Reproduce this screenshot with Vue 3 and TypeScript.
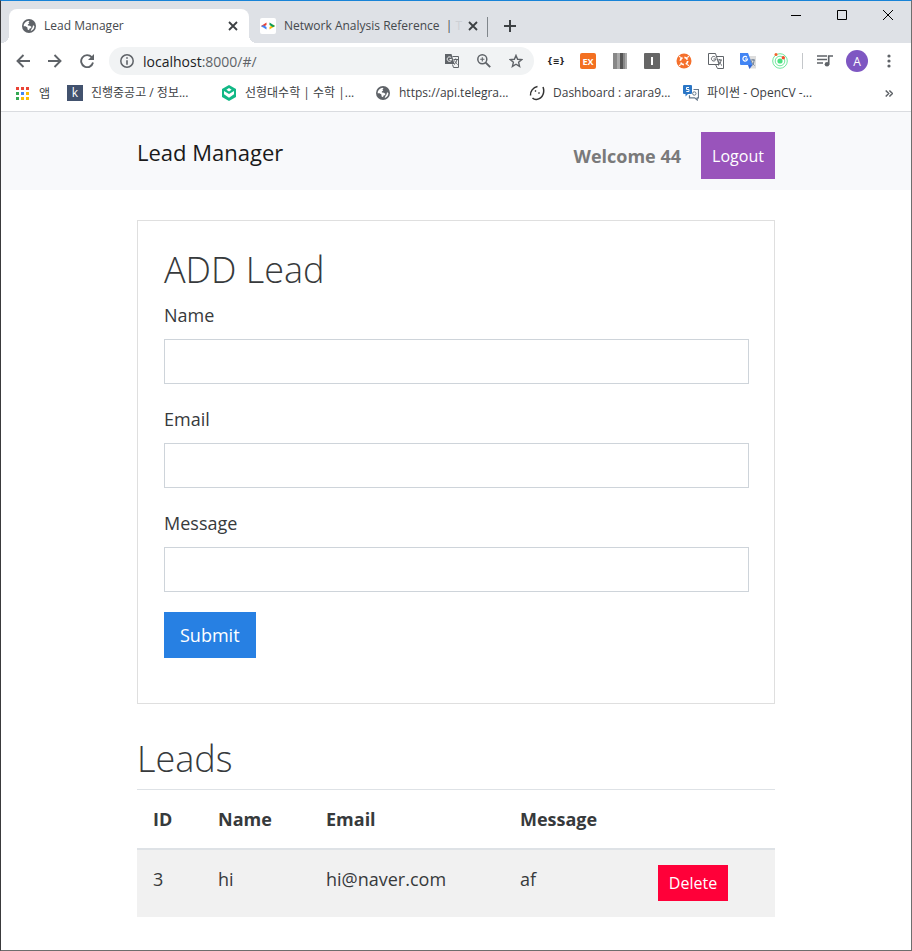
<script setup lang="ts">
import { ref } from 'vue'

interface Lead {
  id: number
  name: string
  email: string
  message: string
}

interface Bookmark {
  icon: string
  label: string
}

const bookmarks: Bookmark[] = [
  { icon: 'k', label: '진행중공고 / 정보...' },
  { icon: 'hex', label: '선형대수학 | 수학 |...' },
  { icon: 'globe', label: 'https://api.telegra...' },
  { icon: 'ring', label: 'Dashboard : arara9...' },
  { icon: 'chat', label: '파이썬 - OpenCV -...' },
]

const appColors = ['#ea4335', '#ea4335', '#ea4335', '#34a853', '#4285f4', '#fbbc05', '#34a853', '#fbbc05', '#fbbc05']

const name = ref('')
const email = ref('')
const message = ref('')
const leads = ref<Lead[]>([{ id: 3, name: 'hi', email: 'hi@naver.com', message: 'af' }])

function addLead(): void {
  const nextId = leads.value.reduce((max, l) => Math.max(max, l.id), 0) + 1
  leads.value.push({ id: nextId, name: name.value, email: email.value, message: message.value })
  name.value = ''
  email.value = ''
  message.value = ''
}

function removeLead(id: number): void {
  leads.value = leads.value.filter((l) => l.id !== id)
}
</script>

<template>
  <div class="window">
    <svg class="defs" aria-hidden="true">
      <symbol id="globe" viewBox="0 0 14 14">
        <circle cx="7" cy="7" r="7" fill="#5f6368" />
        <path d="M1.600 7.200C1.600 4.500 3.600 2.200 6.300 1.700L7.600 2.600 6.400 3.600 7.300 4.400 5.800 5.600 5.900 6.600 8 6.700 9.600 8 8.600 9.300 7.300 9.700 7.200 11.200 5.600 10.400 5.400 8.600 3.600 7.300z" fill="#fff" />
        <path d="M8.600 12.200C11 11.500 12.400 9.500 12.400 7.100L11 6.200 10.600 8.300 9.400 10z" fill="#fff" />
      </symbol>
      <symbol id="close" viewBox="0 0 10 10">
        <path d="M1 1l8 8M9 1l-8 8" stroke="currentColor" stroke-width="1.8" fill="none" />
      </symbol>
    </svg>

    <header class="tabstrip">
      <div class="tab active">
        <svg class="favicon"><use href="#globe" /></svg>
        <span class="tab-title">Lead Manager</span>
        <button class="tab-close" aria-label="Close tab"><svg width="10" height="10"><use href="#close" /></svg></button>
      </div>
      <div class="tab idle">
        <svg class="favicon wide" viewBox="0 0 16 16">
          <rect width="16" height="16" rx="2" fill="#fff" />
          <path d="M6.500 4.500L1 8l1.800 1.200L6.500 7z" fill="#ea4335" />
          <path d="M1 8l5.500 3.500V9L3.800 7.200z" fill="#4285f4" />
          <path d="M9.500 11.500L15 8l-1.800-1.200L9.500 9z" fill="#fbbc05" />
          <path d="M9.500 4.500L15 8l-2 1.300L9.500 7z" fill="#0f9d58" />
        </svg>
        <span class="tab-title">Network Analysis Reference&nbsp; | <span class="faded">T</span></span>
        <button class="tab-close" aria-label="Close tab"><svg width="10" height="10"><use href="#close" /></svg></button>
      </div>
      <button class="new-tab" aria-label="New tab">
        <svg width="12" height="12" viewBox="0 0 12 12"><path d="M6 0v12M0 6h12" stroke="#3c4043" stroke-width="2" /></svg>
      </button>
      <div class="controls">
        <button aria-label="Minimize"><svg width="10" height="10"><path d="M0 5.500h10" stroke="#000" /></svg></button>
        <button aria-label="Maximize"><svg width="10" height="10"><path d="M.5.5h9v9h-9z" stroke="#000" fill="none" /></svg></button>
        <button aria-label="Close"><svg width="10" height="10"><path d="M0 0l10 10M10 0L0 10" stroke="#000" /></svg></button>
      </div>
    </header>

    <div class="toolbar">
      <button class="tool" aria-label="Back">
        <svg width="14" height="14" viewBox="0 0 14 14"><path d="M14 7H1.500M7.500 1L1.500 7l6 6" class="stroke" /></svg>
      </button>
      <button class="tool" aria-label="Forward">
        <svg width="14" height="14" viewBox="0 0 14 14"><path d="M0 7h12.500M6.500 1l6 6-6 6" class="stroke" /></svg>
      </button>
      <button class="tool" aria-label="Reload">
        <svg width="14" height="14" viewBox="0 0 14 14">
          <path d="M11.700 3.200A6 6 0 1 0 13 8.500" class="stroke" />
          <path d="M14 0v6H8z" fill="#5f6368" />
        </svg>
      </button>
      <div class="omnibox">
        <svg width="14" height="14" viewBox="0 0 14 14">
          <circle cx="7" cy="7" r="6.200" fill="none" stroke="#5f6368" stroke-width="1.500" />
          <path d="M7 3.200v1.600M7 6.200v4.600" stroke="#5f6368" stroke-width="1.600" />
        </svg>
        <span class="url">localhost<i>:8000/#/</i></span>
        <button class="tool" aria-label="Translate">
          <svg width="14" height="14" viewBox="0 0 14 14">
            <path d="M0 0h6.500l3 10H0z" fill="#5f6368" />
            <path d="M7.500 2.500h6v11h-5l-1-3" fill="none" stroke="#5f6368" />
            <path d="M6.200 3.800A2.200 2.200 0 1 0 6.600 5.500H4.500" fill="none" stroke="#fff" />
            <path d="M8.500 5.500H13M10.700 4.500v1M9 10.500c1.500-1 2.500-2.500 3-5M9.500 6.500c.7 1.500 1.500 2.500 3 4" fill="none" stroke="#5f6368" />
          </svg>
        </button>
        <button class="tool" aria-label="Zoom">
          <svg width="14" height="14" viewBox="0 0 14 14">
            <circle cx="5.300" cy="5.300" r="4.500" fill="none" stroke="#5f6368" stroke-width="1.500" />
            <path d="M8.700 8.700l4.500 4.500" stroke="#5f6368" stroke-width="1.900" />
            <path d="M5.300 3.200v4.200M3.200 5.300h4.200" stroke="#5f6368" stroke-width="1.100" />
          </svg>
        </button>
        <button class="tool" aria-label="Bookmark this page">
          <svg width="14" height="14" viewBox="0 0 14 14">
            <path d="M7 1.400l1.600 3.900 4.200.3-3.200 2.700 1 4.100L7 10.200l-3.600 2.200 1-4.100L1.200 5.600l4.200-.3z" fill="none" stroke="#5f6368" stroke-width="1.400" />
          </svg>
        </button>
      </div>

      <div class="extensions">
        <button class="tool braces">{≡}</button>
        <button class="tool"><span class="ex">EX</span></button>
        <button class="tool" aria-label="Bars">
          <svg width="14" height="16" viewBox="0 0 14 16">
            <path d="M0 0h4v16H0z" fill="#888" /><path d="M4 0h3v16H4z" fill="#aaa" /><path d="M7 0h3v16H7z" fill="#555" /><path d="M10 0h2v16h-2z" fill="#888" /><path d="M12 0h2v16h-2z" fill="#aaa" />
          </svg>
        </button>
        <button class="tool" aria-label="Instapaper">
          <svg width="16" height="16" viewBox="0 0 16 16"><rect width="16" height="16" rx="1" fill="#666" /><path d="M8 4v8" stroke="#fff" stroke-width="2" /></svg>
        </button>
        <button class="tool" aria-label="Support">
          <svg width="16" height="16" viewBox="0 0 16 16">
            <circle cx="8" cy="8" r="7.500" fill="#f5702c" />
            <circle cx="8" cy="8" r="3.700" fill="none" stroke="#fff" stroke-width="1.700" stroke-dasharray="3.800 2" />
            <path d="M3.200 3.200l1.500 1.500M12.800 3.200l-1.500 1.500M3.200 12.800l1.500-1.500M12.800 12.800l-1.500-1.500" stroke="#fff" stroke-width="1.200" />
          </svg>
        </button>
        <button class="tool" aria-label="Translate page">
          <svg width="16" height="16" viewBox="0 0 16 16" fill="none" stroke="#5f6368">
            <path d="M.5.5h7l3.500 11H.5zM9 3.500h6.500v12h-6l-2-4" />
            <path d="M7.500 4.300A2.300 2.300 0 1 0 8 6H5.500M9.500 7H14M11.700 6v1M10 12.500c2-1.500 2.700-3 3-5.500M10.500 8c.7 1.700 1.700 3 3.500 4.500" />
          </svg>
        </button>
        <button class="tool" aria-label="Google Translate">
          <svg width="16" height="16" viewBox="0 0 16 16">
            <path d="M7 3h9v12.500H9z" fill="#ddd" /><path d="M0 0h8l4.500 12H1q-1 0-1-1z" fill="#4285f4" /><path d="M8 12h4.500L9.500 16z" fill="#3367d6" />
            <path d="M7 4.300A2.300 2.300 0 1 0 7.500 6H5" fill="none" stroke="#fff" stroke-width="1.200" />
            <path d="M10.500 7H15M13 6v1M12 12.500c1.500-1.500 2-3 2-5.500M11 8c1 2 2 3 3.500 4.500" fill="none" stroke="#6b7c93" />
          </svg>
        </button>
        <button class="tool" aria-label="Radar">
          <svg width="16" height="16" viewBox="0 0 16 16">
            <circle cx="8" cy="8" r="7.300" fill="none" stroke="#6fe79c" /><circle cx="8" cy="8" r="4.800" fill="none" stroke="#6fe79c" /><circle cx="8" cy="8" r="2.600" fill="#4be080" />
            <circle cx="4" cy="1.600" r="1.500" fill="#f4632c" /><circle cx="11.300" cy="4.800" r="1.700" fill="#f4502c" />
          </svg>
        </button>
      </div>
      <span class="divider"></span>
      <button class="tool" aria-label="Media">
        <svg width="16" height="14" viewBox="0 0 16 14">
          <path d="M0 2h10M0 5.500h10M0 9h6" stroke="#5f6368" stroke-width="1.700" />
          <circle cx="10" cy="10.300" r="2.300" fill="#5f6368" /><path d="M11.700 10.500V2H16" fill="none" stroke="#5f6368" stroke-width="1.700" />
        </svg>
      </button>
      <button class="tool"><span class="avatar">A</span></button>
      <button class="tool" aria-label="Menu">
        <svg width="4" height="14" viewBox="0 0 4 14" fill="#5f6368"><circle cx="2" cy="2" r="1.600" /><circle cx="2" cy="7" r="1.600" /><circle cx="2" cy="12" r="1.600" /></svg>
      </button>
    </div>

    <nav class="bookmarks" aria-label="Bookmarks">
      <a class="apps" href="#">
        <svg width="13" height="13" viewBox="0 0 13 13">
          <rect v-for="(c, i) in appColors" :key="i" :x="(i % 3) * 5" :y="Math.floor(i / 3) * 5" width="3" height="3" :fill="c" />
        </svg>
        <span>앱</span>
      </a>
      <a v-for="b in bookmarks" :key="b.label" class="bookmark" href="#">
        <span v-if="b.icon === 'k'" class="k">k</span>
        <svg v-else-if="b.icon === 'hex'" class="mark" viewBox="0 0 16 16">
          <path d="M8 0l7 4v8l-7 4-7-4V4z" fill="#12b886" />
          <path d="M3 6l5 3 5-3v3.200L8 12.800 3 9.200z" fill="#fff" /><path d="M8 3l2.600 1.700L8 6.400 5.400 4.700z" fill="#fff" />
        </svg>
        <svg v-else-if="b.icon === 'globe'" class="mark small"><use href="#globe" /></svg>
        <svg v-else-if="b.icon === 'ring'" class="mark" viewBox="0 0 16 16" fill="none" stroke="#333" stroke-width="1.500">
          <path d="M8.500 1.500C4 2.500 1 6.500 1.500 10.500" />
          <path d="M14 2c1.700 4.500.5 11.500-6.500 12.500C5.500 14.700 4.500 14 3.500 13" />
          <path d="M6 5.500l1 1M9.500 7.500l1 1" />
        </svg>
        <svg v-else class="mark" viewBox="0 0 16 16">
          <path d="M1 0h7q1 0 1 1v7q0 1-1 1H5l-2.500 2.500V9H1Q0 9 0 8V1q0-1 1-1z" fill="#2a76c6" />
          <path d="M6 2.500H3.500v2H6v2H3.300" fill="none" stroke="#fff" />
          <path d="M10.500 4.500h5v8.300h-1.300V15l-2.500-2.200H6.500v-2.500" fill="none" stroke="#66788a" stroke-width="1.200" />
          <circle cx="11.300" cy="8.500" r="1.700" fill="none" stroke="#66788a" />
        </svg>
        <span class="bookmark-label">{{ b.label }}</span>
      </a>
      <button class="more" aria-label="More bookmarks">
        <svg width="8" height="7" viewBox="0 0 8 7"><path d="M.7.5l3 3-3 3M4.400.5l3 3-3 3" fill="none" stroke="#5f6368" stroke-width="1.500" /></svg>
      </button>
    </nav>

    <div class="page">
      <div class="navbar">
        <div class="container nav-inner">
          <a class="brand" href="#">Lead Manager</a>
          <strong class="welcome">Welcome 44</strong>
          <button class="logout">Logout</button>
        </div>
      </div>

      <main class="container">
        <form class="card" @submit.prevent="addLead">
          <h2>ADD Lead</h2>
          <div class="field">
            <label for="lead-name">Name</label>
            <input id="lead-name" v-model="name" type="text" />
          </div>
          <div class="field">
            <label for="lead-email">Email</label>
            <input id="lead-email" v-model="email" type="email" />
          </div>
          <div class="field">
            <label for="lead-message">Message</label>
            <input id="lead-message" v-model="message" type="text" />
          </div>
          <button class="submit" type="submit">Submit</button>
        </form>

        <h2>Leads</h2>
        <table>
          <colgroup>
            <col class="c-id" /><col class="c-name" /><col class="c-email" /><col class="c-message" /><col />
          </colgroup>
          <thead>
            <tr><th>ID</th><th>Name</th><th>Email</th><th>Message</th><th></th></tr>
          </thead>
          <tbody>
            <tr v-for="lead in leads" :key="lead.id">
              <td>{{ lead.id }}</td>
              <td>{{ lead.name }}</td>
              <td>{{ lead.email }}</td>
              <td>{{ lead.message }}</td>
              <td><button class="delete" @click="removeLead(lead.id)">Delete</button></td>
            </tr>
          </tbody>
        </table>
      </main>
    </div>
  </div>
</template>

<style>
body {
  margin: 0;
  background: #fff;
}
</style>

<style scoped>
* {
  box-sizing: border-box;
}
.window {
  min-height: 100vh;
  border: 1px solid #6e6e6e;
  border-top-color: #1883d7;
  border-left-color: #3a3a3c;
  background: #fff;
  font-family: "Open Sans", "Noto Sans CJK KR", sans-serif;
  color: #373a3c;
}
.defs {
  position: absolute;
  width: 0;
  height: 0;
}
button {
  border: 0;
  padding: 0;
  background: none;
  font-family: inherit;
  color: inherit;
}
a {
  color: inherit;
  text-decoration: none;
}
svg {
  display: block;
  flex: none;
}

/* Browser frame */
.tabstrip {
  display: flex;
  height: 42px;
  padding-left: 8px;
  background: #dee1e6;
}
.tab {
  display: flex;
  align-items: center;
  gap: 8px;
  width: 240px;
  height: 34px;
  margin-top: 8px;
  padding: 0 11px 0 13px;
  font-size: 12px;
  color: #45494d;
}
.tab.active {
  position: relative;
  background: #fff;
  border-radius: 8px 8px 0 0;
}
.tab.active::before,
.tab.active::after {
  content: "";
  position: absolute;
  bottom: 0;
  width: 8px;
  height: 8px;
}
.tab.active::before {
  left: -8px;
  background: radial-gradient(circle at 0 0, transparent 8px, #fff 8px);
}
.tab.active::after {
  right: -8px;
  background: radial-gradient(circle at 100% 0, transparent 8px, #fff 8px);
}
.tab.idle {
  position: relative;
  gap: 6px;
  padding: 0 12px 0 11px;
}
.tab.idle .favicon {
  margin-right: 2px;
}
.tab.idle::after {
  content: "";
  position: absolute;
  right: 1px;
  top: 8px;
  width: 1px;
  height: 20px;
  background: #80868b;
}
.favicon {
  width: 14px;
  height: 14px;
}
.favicon.wide {
  width: 16px;
  height: 16px;
}
.tab-title {
  flex: 1;
  padding-bottom: 2px;
  white-space: nowrap;
}
.faded {
  color: #cdd0d5;
}
.tab-close {
  color: #3c4043;
}
.new-tab {
  display: grid;
  place-items: center;
  width: 28px;
  height: 34px;
  margin: 8px 0 0 7px;
}
.controls {
  display: flex;
  margin-left: auto;
}
.controls button {
  display: grid;
  place-items: center;
  width: 46px;
  height: 28px;
}
.toolbar {
  display: flex;
  align-items: center;
  height: 36px;
  padding: 0 6px;
}
.tool {
  display: grid;
  place-items: center;
  flex: none;
  width: 32px;
  height: 28px;
}
.stroke {
  fill: none;
  stroke: #5f6368;
  stroke-width: 1.9;
}
.omnibox {
  display: flex;
  align-items: center;
  flex: 1;
  height: 28px;
  margin: 0 6px;
  padding: 0 2px 0 11px;
  border-radius: 14px;
  background: #f1f3f4;
}
.url {
  flex: 1;
  margin-left: 9px;
  font-size: 14px;
  color: #202124;
}
.url i {
  font-style: normal;
  color: #5f6368;
}
.extensions {
  display: flex;
}
.braces {
  font: bold 8px "DejaVu Sans", sans-serif;
  color: #222;
}
.ex {
  display: grid;
  place-items: center;
  width: 16px;
  height: 16px;
  border-radius: 2px;
  background: #f37021;
  color: #fff;
  font-size: 9px;
  font-weight: 700;
}
.divider {
  width: 1px;
  height: 16px;
  margin: 0 6px;
  background: #c4c7ca;
}
.avatar {
  display: grid;
  place-items: center;
  width: 22px;
  height: 22px;
  border-radius: 50%;
  background: #7e57c2;
  color: #fff;
  font-size: 12px;
}
.bookmarks {
  display: flex;
  align-items: center;
  height: 33px;
  padding: 0 18px 4px 15px;
  border-bottom: 1px solid #dadce0;
  font-size: 12px;
  color: #3c4043;
}
.apps {
  display: flex;
  align-items: center;
  gap: 10px;
  width: 51px;
}
.bookmark {
  display: flex;
  align-items: center;
  gap: 8px;
  width: 154px;
}
.bookmark-label {
  padding-bottom: 2px;
  white-space: nowrap;
}
.mark {
  width: 16px;
  height: 16px;
}
.mark.small {
  padding: 1px;
}
.k {
  width: 16px;
  height: 16px;
  background: #42526e;
  color: #fff;
  line-height: 15px;
  text-align: center;
}
.more {
  margin-left: auto;
}

/* Page */
.container {
  width: 70%;
  min-width: 638px;
  margin: 0 auto;
}
.navbar {
  padding: 20px 0 11px;
  background: #f8f9fb;
}
.nav-inner {
  display: flex;
  align-items: center;
}
.brand {
  align-self: flex-start;
  margin-right: auto;
  font-size: 22px;
  line-height: 40px;
  color: #1a1a1a;
}
.welcome {
  font-size: 18px;
  color: #7a7a7a;
}
.logout {
  width: 74px;
  height: 47px;
  margin-left: 20px;
  background: #9954bb;
  color: #fff;
  font-size: 16px;
}
.card {
  margin: 30px 0;
  padding: 24px 25px 45px 26px;
  border: 1px solid #dfdfdf;
}
h2 {
  margin: 0 0 6px;
  font-size: 36px;
  font-weight: 300;
  line-height: 49px;
}
.field {
  margin-bottom: 20px;
}
.field label {
  display: block;
  margin-bottom: 8px;
  font-size: 18px;
  line-height: 31px;
}
.field input {
  display: block;
  width: 100%;
  height: 45px;
  padding: 0 18px;
  border: 1px solid #ced4da;
  border-radius: 0;
  font: inherit;
  font-size: 18px;
}
.submit {
  display: block;
  height: 46px;
  padding: 0 16px;
  background: #2780e3;
  color: #fff;
  font-size: 18px;
}
table {
  width: 100%;
  border-collapse: collapse;
  table-layout: fixed;
  font-size: 18px;
  line-height: 28px;
}
.c-id {
  width: 65px;
}
.c-name {
  width: 108px;
}
.c-email {
  width: 194px;
}
.c-message {
  width: 138px;
}
th,
td {
  padding: 15px 0 15px 16px;
  text-align: left;
  vertical-align: top;
}
td {
  padding-bottom: 16px;
}
th {
  border-top: 1px solid #dee2e6;
  border-bottom: 2px solid #dee2e6;
}
tbody tr {
  background: #f1f1f1;
}
.delete {
  display: block;
  width: 70px;
  height: 36px;
  background: #ff0039;
  color: #fff;
  font-size: 16px;
}
</style>
